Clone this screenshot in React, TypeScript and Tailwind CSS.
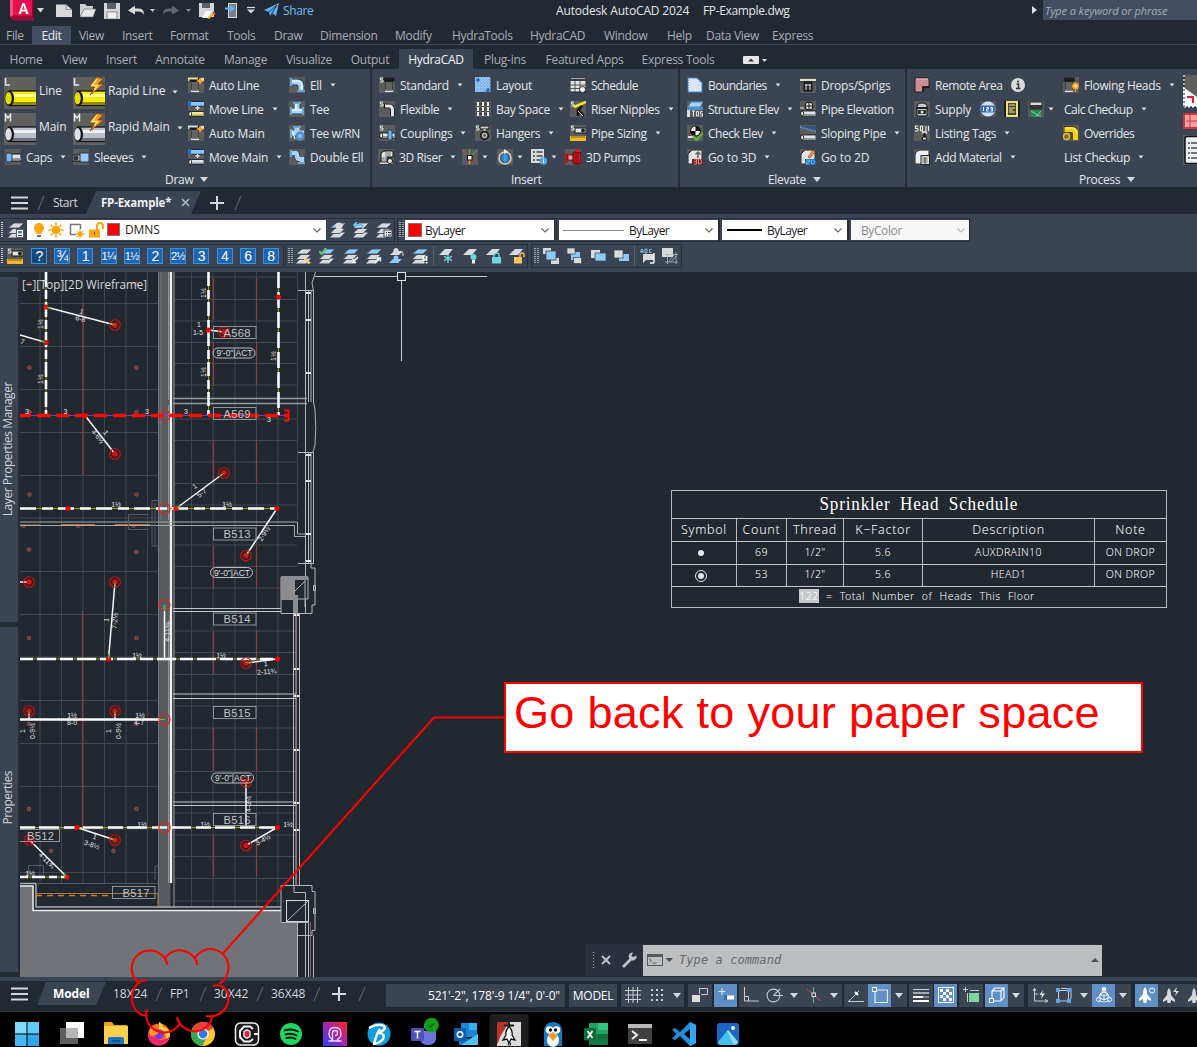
import React from 'react';

type Kids = { children?: React.ReactNode };

/* ---------- small drawing helpers ---------- */

function Svg({ s = 16, children, className = '' }: { s?: number; className?: string } & Kids) {
  return (
    <svg width={s} height={s} viewBox="0 0 16 16" className={'shrink-0 ' + className} fill="none">
      {children}
    </svg>
  );
}

const Bg = () => <rect width="16" height="16" fill="#5c5c5a" />;
const S = () => <path d="M4 1H1.5V3H4V5H1" stroke="#e8e8e8" strokeWidth="1" />;
const Pipe = ({ y = 9, c = '#e2e6ee', d = '#8d93a0' }: { y?: number; c?: string; d?: string }) => (
  <g>
    <rect x="1" y={y} width="15" height="5" fill={c} stroke="#111" strokeWidth="0.8" />
    <rect x="3" y={y + 3} width="13" height="1.5" fill={d} />
    <ellipse cx="2.2" cy={y + 2.5} rx="1.5" ry="2.3" fill="#fff" stroke="#111" strokeWidth="0.8" />
  </g>
);
const Head = ({ x = 4 }: { x?: number }) => (
  <g transform={`translate(${x} 0)`}>
    <rect x="0" y="1" width="10" height="3" fill="#222" stroke="#111" />
    <rect x="1.5" y="4" width="7" height="10" rx="1" fill="#1d1d1d" />
    <path d="M3 5v8M5 5v8M7 5v8" stroke="#bbb" strokeWidth="0.9" />
    <rect x="1" y="13.5" width="8" height="1.5" fill="#ddd" />
  </g>
);
const Star = ({ x = 12, y = 4 }: { x?: number; y?: number }) => (
  <path d={`M${x} ${y - 4}l1.2 2.8 2.8 1.2-2.8 1.2L${x} ${y + 4}l-1.2-2.8L${x - 4} ${y}l2.8-1.2z`} fill="#ffa52b" />
);

const ICONS: Record<string, React.ReactNode> = {
  autoLine: <><Bg /><rect y="1" width="16" height="3" fill="#e7df8a" /><Head x={2} /><rect y="0.500" width="10" height="2" fill="#e7df8a" /><Star /></>,
  moveLine: <><Bg /><rect y="1" width="16" height="4" fill="#8ec4ee" /><path d="M0 0.500h16M0 5.300h16" stroke="#16324f" /><rect y="0" width="3" height="6" fill="#2f6fb5" /><path d="M9.500 5v4M7.500 7h4" stroke="#e7eef6" strokeWidth="1.300" /><Pipe y={10.500} c="#efe8a0" d="#b3a94e" /></>,
  autoMain: <><Bg /><rect y="1" width="16" height="3" fill="#d6dae2" /><Head x={2} /><rect y="0.500" width="10" height="2" fill="#d6dae2" /><Star /></>,
  moveMain: <><Bg /><rect y="1" width="16" height="4" fill="#8ec4ee" /><path d="M0 0.500h16M0 5.300h16" stroke="#16324f" /><rect y="0" width="3" height="6" fill="#2f6fb5" /><path d="M9.500 5v4M7.500 7h4" stroke="#e7eef6" strokeWidth="1.300" /><Pipe y={10.500} /></>,
  ell: <><Bg /><path d="M2 5h6q4 0 4 4v6" stroke="#1d3c58" strokeWidth="6.500" /><path d="M2 5h6q4 0 4 4v6" stroke="#a9d4f5" strokeWidth="5" /><path d="M2 4h6q5 0 5 5v6" stroke="#eaf6ff" strokeWidth="1.500" /><rect x="1" y="1" width="2" height="8" fill="#6aa5d8" /><rect x="8" y="13" width="8" height="2" fill="#6aa5d8" /></>,
  tee: <><Bg /><path d="M1 10h14M8 3v7" stroke="#1d3c58" strokeWidth="6.500" /><path d="M1 10h14M8 2v8" stroke="#a9d4f5" strokeWidth="5" /><path d="M2 9h12M7 3v6" stroke="#eaf6ff" strokeWidth="1.500" /><rect x="4" y="1" width="8" height="2" fill="#6aa5d8" /><rect x="1" y="6" width="2" height="8" fill="#6aa5d8" /><rect x="13" y="6" width="2" height="8" fill="#6aa5d8" /></>,
  teeRn: <><Bg /><path d="M1 8h14M8 2v7" stroke="#a9d4f5" strokeWidth="5" /><rect x="4" y="1" width="8" height="2" fill="#6aa5d8" /><rect x="1" y="4" width="2" height="9" fill="#6aa5d8" /><circle cx="11" cy="11" r="4.500" fill="#4b8fd6" /><circle cx="11" cy="11" r="2" fill="#8fc2f2" /><path d="M3 6l3 8" stroke="#fff" /></>,
  dell: <><Bg /><path d="M2 4h4q2 0 2 3t3 3h2v5" stroke="#1d3c58" strokeWidth="6" /><path d="M2 4h4q2 0 2 3t3 3h2v5" stroke="#a9d4f5" strokeWidth="4.500" /><rect x="1" y="1" width="2" height="7" fill="#6aa5d8" /><rect x="9" y="13" width="7" height="2" fill="#6aa5d8" /></>,
  caps: <><Bg /><rect x="5" y="5" width="11" height="7" fill="#dfe4ec" stroke="#111" /><rect x="6" y="9" width="10" height="2" fill="#8d93a0" /><rect x="1" y="4" width="6" height="9" rx="2" fill="#7ab5ee" stroke="#1d3c58" /></>,
  sleeves: <><Bg /><rect x="0" y="6" width="10" height="6" fill="#c9ced8" stroke="#111" /><circle cx="3" cy="9" r="2.500" fill="#333" /><rect x="7" y="4" width="9" height="9" fill="#9cc6f5" stroke="#1d3c58" /></>,
  standard: <><Bg /><Head x={5} /><S /></>,
  flexible: <><Bg /><path d="M5 5h5q3.500 0 3.500 4v6" stroke="#111" strokeWidth="4.500" /><path d="M6 5h4q3.500 0 3.500 4v6" stroke="#e1e4ea" strokeWidth="3" /><S /></>,
  couplings: <><Bg /><Pipe y={8} /><rect x="9" y="5" width="4" height="10" rx="1" fill="#7ab5ee" stroke="#1d3c58" /><S /></>,
  riser3d: <><Bg /><path d="M3 15V6q0-4 5-4h7v6H9v7" fill="#dfe2e6" stroke="#111" /><path d="M8 3v5M10 3v5M12 3v5M3 9h5M3 11h5M3 13h5" stroke="#444" strokeWidth="0.700" /><rect x="1" y="13" width="14" height="2.500" fill="#d5d8dc" stroke="#111" strokeWidth="0.700" /><circle cx="12" cy="12" r="2.500" fill="#eee" stroke="#111" /></>,
  layout: <><rect width="15" height="15" fill="#6da7e8" /><path d="M2 0v15M5 0v15M8 0v15M11 0v15M14 0v15M0 2h16M0 5h16M0 8h16M0 11h16M0 14h16" stroke="#d8e8fa" strokeWidth="0.900" strokeDasharray="1.500 1.500" /><path d="M3 1v4M1 3h4M13 11v5M10.500 13.500h5" stroke="#2668c0" strokeWidth="1.600" /></>,
  bay: <><Bg /><path d="M3 0v16M8 0v16M13 0v16M0 3h16M0 8h16M0 13h16" stroke="#2c2c2c" /><g fill="#eee"><rect x="2" y="1" width="2" height="4" /><rect x="7" y="1" width="2" height="4" /><rect x="12" y="1" width="2" height="4" /><rect x="2" y="6" width="2" height="4" /><rect x="7" y="6" width="2" height="4" /><rect x="12" y="6" width="2" height="4" /><rect x="2" y="11" width="2" height="4" /><rect x="7" y="11" width="2" height="4" /><rect x="12" y="11" width="2" height="4" /></g></>,
  hangers: <><Bg /><rect x="5" y="1" width="9" height="3" fill="#ccc" stroke="#111" /><path d="M9.500 4v3" stroke="#ddd" strokeWidth="2" /><circle cx="9.500" cy="10.500" r="4" stroke="#1a1a1a" strokeWidth="1.500" /><circle cx="9.500" cy="10.500" r="2" stroke="#ddd" /><S /></>,
  schedule: <><rect y="0" width="16" height="15" fill="#e3e3e3" stroke="#222" /><rect y="0" width="16" height="4" fill="#3a3f48" /><path d="M1 1.500h14" stroke="#aaa" /><path d="M0 8h16M0 11.500h16M5 4v11M10 4v11" stroke="#555" /><circle cx="12.500" cy="12.500" r="3" fill="#fff" stroke="#222" /></>,
  nipples: <><Bg /><path d="M4 6l12-5" stroke="#f4ea20" strokeWidth="2.500" /><path d="M8 15V9l4-4M8 9l6 6" stroke="#111" strokeWidth="2.500" /><path d="M8 10l5 5" stroke="#ddd" /><S /></>,
  sizing: <><Bg /><rect x="5" y="3" width="11" height="5" fill="#e1e4ea" stroke="#111" /><rect x="0" y="11" width="16" height="5" fill="#f3b62c" /><path d="M2 11v2M4 11v2M6 11v2M8 11v2M10 11v2M12 11v2M14 11v2" stroke="#6b4a00" strokeWidth="0.800" /><circle cx="13" cy="5.500" r="2" fill="#222" /><S /></>,
  ucs: <><Bg /><path d="M7.500 0v8" stroke="#5aa84c" /><path d="M15 1L8 8" stroke="#5aa84c" /><path d="M1 1l6 7" stroke="#d34a3c" /><path d="M1 15l6-6" stroke="#7a2ad0" /><path d="M15 14L8 8" stroke="#c44" /><path d="M7.500 15V9" stroke="#f0a22c" strokeWidth="1.500" /><rect x="5.500" y="6.500" width="4.500" height="4.500" fill="#fff" stroke="#111" /></>,
  rotate: <><Bg /><circle cx="8" cy="9" r="6" stroke="#cfd3d8" strokeWidth="1.500" /><circle cx="8" cy="9" r="3.500" fill="#1c8be0" /><path d="M8 1v14" stroke="#4db2ff" strokeWidth="1" /><path d="M7 0l4 2.500L7 5z" fill="#eee" /></>,
  listInfo: <><rect x="0" y="0" width="13" height="14" fill="#d8dadd" /><path d="M2 3h2M2 7h2M2 11h2M5.500 3h6M5.500 7h6M5.500 11h4" stroke="#444" strokeWidth="1.300" /><circle cx="12.500" cy="12" r="3.800" fill="#4ba6e8" /><path d="M12.500 11v3" stroke="#fff" /><rect x="12" y="9.300" width="1" height="1" fill="#fff" /></>,
  pumps: <><Bg /><rect x="0" y="4" width="3" height="10" fill="#c4141c" /><rect x="3" y="6" width="6" height="5" fill="#e8a0a0" stroke="#400" strokeWidth="0.700" /><rect x="8" y="3" width="8" height="12" rx="2" fill="#cf1820" stroke="#500" /><path d="M11 3v12M13 3v12" stroke="#700" strokeWidth="0.800" /><rect x="11" y="0" width="4" height="3" fill="#cf1820" /></>,
  boundaries: <><path d="M1 1h9l5 5v9H1z" fill="#dbe4f3" stroke="#3a86e0" strokeWidth="1.500" strokeDasharray="1.500 1" /></>,
  structure: <><Bg /><path d="M4 1h12l-3 5H1z" fill="#a9d6fb" stroke="#4c86bb" /><rect x="0" y="6" width="16" height="3" fill="#4f8fd0" /><rect x="0" y="9" width="3" height="7" fill="#ddd" /><path d="M5 10h3M6.500 10v5.500M9.500 10.500h2v4.500h-2zM15.500 10.500h-2v2.300h2v2.200h-2.500" stroke="#eee" strokeWidth="0.900" /></>,
  check: <><Bg /><circle cx="8.500" cy="6" r="5" fill="#eee" stroke="#111" /><path d="M8.500 1v5h5a5 5 0 00-5-5zM8.500 6v5a5 5 0 01-5-5z" fill="#111" /><path d="M1 12h7" stroke="#ddd" strokeWidth="2" /><path d="M6 11l3.500 4L16 8" stroke="#5fb336" strokeWidth="2.500" /></>,
  go3d: <><Bg /><path d="M1 15V5l4-4h10v14z" fill="#e3e3e6" stroke="#222" /><path d="M11 9V3M8.500 5.500L11 3l2.500 2.500" stroke="#666" strokeWidth="1.500" /><rect x="5" y="10" width="11" height="6" fill="#6c2a30" /><path d="M7 10h2.500v2.500H7.500M9.500 12.500V15H7M11.500 10v5h1q2 0 2-2.500t-2-2.500z" stroke="#ff7f7f" strokeWidth="1" /></>,
  drops: <><Bg /><path d="M0 3h16" stroke="#ddd" strokeWidth="2.500" /><path d="M0 1h16M0 5h16" stroke="#111" strokeWidth="0.800" /><rect x="4" y="5" width="8" height="9" fill="#2a2a2a" stroke="#111" /><path d="M6 7v6M10 7v6M5 8h6" stroke="#ddd" /></>,
  pipeElev: <><Bg /><circle cx="9" cy="5" r="4" fill="#ddd" stroke="#111" /><path d="M9 1v4h4M9 5v4M5 5h4" stroke="#111" /><Pipe y={10} /><path d="M0 7h4" stroke="#ddd" /></>,
  sloping: <><Bg /><path d="M0 1h16v5z" fill="#33527c" /><path d="M0 2l16 4.500" stroke="#5b9be0" strokeWidth="1.500" strokeDasharray="2 1" /><Pipe y={10} /></>,
  go2d: <><Bg /><path d="M1 15V5l4-4h10v14z" fill="#e3e3e6" stroke="#222" /><path d="M8 8l5-7 2 2-5 6z" fill="#f09a2a" stroke="#733" strokeWidth="0.600" /><rect x="5" y="10" width="11" height="6" fill="#1c62b0" /><path d="M6.500 11h3v2h-3v2h3M11.500 11v4h1q2 0 2-2t-2-2z" stroke="#6fc0ff" strokeWidth="1" /></>,
  remote: <><path d="M1 1h14v9H9v5H1z" fill="#c98f92" stroke="#3a1b1d" /><path d="M15 10H9v5" stroke="#111" strokeWidth="1.500" /><path d="M2 2h12" stroke="#e4c2c4" /></>,
  supply: <><Bg /><path d="M3 15V6q0-4 5-4t5 4v9z" fill="#c7cbd0" stroke="#111" /><rect x="2" y="6" width="12" height="2" fill="#222" /><rect x="4" y="9" width="8" height="4" fill="#333" /><circle cx="8" cy="11" r="1.500" fill="#ddd" /></>,
  n123: <><rect width="16" height="16" rx="1" fill="#55585e" /><circle cx="8" cy="8" r="7.500" fill="#cfe2f8" /><rect x="1" y="4.500" width="14" height="7" rx="1" fill="#2b68bf" /><path d="M3.500 6v4M6.500 6.500h2v1.500h-2v2h2M10.500 6.500h2v3.500h-2M10.500 8h2" stroke="#fff" strokeWidth="1" /></>,
  yellowDoc: <><rect width="16" height="16" fill="#1c1c1c" /><rect x="2" y="0" width="12" height="16" fill="#e9e27a" /><path d="M1.500 0v16M14.500 0v16" stroke="#111" strokeDasharray="1.500 1.500" /><rect x="4" y="2" width="8" height="12" fill="#4a4a3e" /><path d="M5 4h6M5 7h6M5 9h4M5 11h6" stroke="#e9e27a" /></>,
  greenDoc: <><Bg /><rect x="2" y="1" width="12" height="7" fill="#d7d9db" stroke="#222" /><rect x="2" y="4" width="12" height="4" fill="#333" /><rect x="3" y="9" width="10" height="7" fill="#2c8a5a" /><path d="M3 10l10 6M13 10l-5 6" stroke="#8fe0b4" strokeWidth="0.800" /></>,
  tags: <><Bg /><path d="M4 1H1.500v2.500H4V6H1M6.500 1v5h2V1zM12 1v5M14.500 1v5" stroke="#e8e8e8" strokeWidth="1" /><rect x="8" y="6" width="5" height="3" fill="#ccc" /><path d="M10.500 8v4" stroke="#111" strokeWidth="2" /><path d="M8 15l1-3h3l1 3z" fill="#ddd" stroke="#111" /></>,
  addMat: <><Bg /><path d="M1 15V6q1-5 6-5h8v6H8v8z" fill="#f0f1f2" stroke="#222" /><rect x="7" y="6.500" width="8.500" height="9" fill="#ddd" stroke="#222" /><path d="M8.500 9h5M8.500 11h5M8.500 13h5M11 8v7" stroke="#444" strokeWidth="0.800" /></>,
  flowing: <><Bg /><Head x={1} /><circle cx="12.500" cy="9" r="3.500" fill="#ff9a1c" /><circle cx="12.500" cy="9" r="1.700" fill="#fff1b0" /><path d="M12.500 12v3" stroke="#ff9a1c" /></>,
  overrides: <><Bg /><path d="M1 4.500h7q4 0 4 4V15" stroke="#4b3d00" strokeWidth="7" /><path d="M1.500 4.500h7q4 0 4 4V15" stroke="#f1cf12" strokeWidth="5.200" /><path d="M2 3h7q4.500 0 4.500 4.500" stroke="#fff38c" strokeWidth="1.200" /><circle cx="3.500" cy="11.500" r="3" fill="#7a6a20" stroke="#e5c81c" strokeWidth="1.300" /></>,
};

const Ic = ({ n }: { n: string }) => <Svg>{ICONS[n]}</Svg>;
const Arr = ({ c = '' }: { c?: string }) => (
  <svg width="6" height="4" viewBox="0 0 6 4" className={'shrink-0 ' + c}><path d="M0.500 0.500h5L3 3.500z" fill="#dfe1e4" /></svg>
);
const ArrL = ({ c = '' }: { c?: string }) => (
  <svg width="8" height="5" viewBox="0 0 8 5" className={'shrink-0 ' + c}><path d="M0 0h8L4 5z" fill="#d6d8dc" /></svg>
);

/* ---------- ribbon ---------- */

function Cmd({ icon, t, arrow, plain, fit = 'tracking-[-0.3px]' }: { icon?: string; t: string; arrow?: boolean; plain?: boolean; fit?: string }) {
  return (
    <div className="flex h-6 items-center whitespace-nowrap">
      {icon && <Ic n={icon} />}
      <span className={'pt-0.5 ' + fit + (plain ? ' ml-px' : ' ml-[5px]')}>{t}</span>
      {arrow && <Arr c="ml-2" />}
    </div>
  );
}

function BigPipe({ l, yellow, bolt }: { l: string; yellow?: boolean; bolt?: boolean }) {
  const a = yellow ? '#f6ef00' : '#b9bec8';
  const b = yellow ? '#fffb9a' : '#eef0f4';
  const d = yellow ? '#8f8a00' : '#6d727c';
  return (
    <svg width="32" height="32" viewBox="0 0 32 32" className="shrink-0">
      <rect width="32" height="32" fill="#5f5f5d" />
      {l === 'L' ? <path d="M1.500 1v7h4.500" stroke="#e4e4e4" strokeWidth="1.600" fill="none" /> : <path d="M1.500 8.500V1.500L4 5l2.500-3.500v7" stroke="#e4e4e4" strokeWidth="1.500" fill="none" />}
      <rect x="5" y="14" width="28" height="14.500" fill={a} stroke="#15151a" strokeWidth="1.300" />
      <rect x="6" y="17" width="26" height="3" fill={b} />
      <rect x="6" y="25" width="26" height="3" fill={d} />
      <ellipse cx="5.500" cy="21.300" rx="4.600" ry="7.600" fill="#15151a" />
      <ellipse cx="4.500" cy="21.300" rx="3.200" ry="6.200" fill={yellow ? '#e4dd00' : '#dddfe4'} />
      {bolt && <path d="M24 0l-8 10h6l-5 8 14-11h-6l5-5z" fill="#f59a1a" stroke="#7a3e00" strokeWidth="0.800" />}
      {bolt && <path d="M24 2l-5 6.500h5.500l-3 4" stroke="#ffe38a" strokeWidth="1.500" fill="none" />}
    </svg>
  );
}

function Panel({ w, title, tri, pad, children }: { w: string; title: string; tri?: boolean; pad: string } & Kids) {
  return (
    <div className={'flex shrink-0 flex-col border-r-2 border-[#272e39] bg-[#3b4453] ' + w}>
      <div className="mt-1 flex h-24">{children}</div>
      <div className={'flex h-[18px] items-center pt-[3px] ' + pad}>
        <span className="tracking-[-0.3px]">{title}</span>
        {tri && <ArrL c="ml-[7px]" />}
      </div>
    </div>
  );
}

function BigCmd({ l, t, yellow, bolt }: { l: string; t: string; yellow?: boolean; bolt?: boolean }) {
  return (
    <div className="flex h-9 items-center gap-[3px] pt-1">
      <BigPipe l={l} yellow={yellow} bolt={bolt} />
      <span className="-mt-1 tracking-[-0.1px] whitespace-nowrap">{t}</span>
      {bolt && <Arr c="-mt-0.5 ml-1" />}
    </div>
  );
}

function Ribbon() {
  return (
    <div className="flex h-[118px] overflow-hidden text-[12px] text-[#e4e6e9]">
      <Panel w="w-[372px]" title="Draw" tri pad="pl-[165px]">
        <div className="w-[69px] pl-1">
          <BigCmd l="L" t="Line" yellow />
          <BigCmd l="M" t="Main" />
          <div className="ml-px"><Cmd icon="caps" t="Caps" arrow /></div>
        </div>
        <div className="w-[115px] pl-1">
          <BigCmd l="L" t="Rapid Line" yellow bolt />
          <BigCmd l="M" t="Rapid Main" bolt />
          <Cmd icon="sleeves" t="Sleeves" arrow />
        </div>
        <div className="w-[101px] pl-1">
          <Cmd icon="autoLine" t="Auto Line" />
          <Cmd icon="moveLine" t="Move Line" arrow />
          <Cmd icon="autoMain" t="Auto Main" fit="tracking-[-0.2px]" />
          <Cmd icon="moveMain" t="Move Main" arrow />
        </div>
        <div className="pl-1">
          <Cmd icon="ell" t="Ell" arrow />
          <Cmd icon="tee" t="Tee" />
          <Cmd icon="teeRn" t="Tee w/RN" fit="tracking-[-0.45px]" />
          <Cmd icon="dell" t="Double Ell" />
        </div>
      </Panel>
      <Panel w="w-[308px]" title="Insert" pad="pl-[139px]">
        <div className="flex flex-col pl-[7px]">
          <div className="flex">
            <div className="w-24">
              <Cmd icon="standard" t="Standard" arrow />
              <Cmd icon="flexible" t="Flexible" arrow fit="tracking-[-0.4px]" />
              <Cmd icon="couplings" t="Couplings" arrow />
            </div>
            <div className="w-[95px]">
              <Cmd icon="layout" t="Layout" />
              <Cmd icon="bay" t="Bay Space" arrow />
              <Cmd icon="hangers" t="Hangers" arrow fit="tracking-[-0.4px]" />
            </div>
            <div>
              <Cmd icon="schedule" t="Schedule" fit="tracking-[-0.5px]" />
              <Cmd icon="nipples" t="Riser Nipples" arrow fit="tracking-[-0.35px]" />
              <Cmd icon="sizing" t="Pipe Sizing" arrow fit="tracking-[-0.35px]" />
            </div>
          </div>
          <div className="-ml-px flex h-6 items-center">
            <div className="w-[84px]"><Cmd icon="riser3d" t="3D Riser" arrow fit="tracking-[-0.4px]" /></div>
            <div className="flex w-[35px] items-center gap-1"><Ic n="ucs" /><Arr /></div>
            <div className="flex w-[34px] items-center gap-1"><Ic n="rotate" /><Arr /></div>
            <div className="flex w-[34px] items-center gap-1"><Ic n="listInfo" /><Arr /></div>
            <Cmd icon="pumps" t="3D Pumps" fit="tracking-[-0.4px]" />
          </div>
        </div>
      </Panel>
      <Panel w="w-[227px]" title="Elevate" tri pad="pl-[88px]">
        <div className="w-[120px] pl-[7px]">
          <Cmd icon="boundaries" t="Boundaries" arrow fit="tracking-[-0.55px]" />
          <Cmd icon="structure" t="Structure Elev" arrow fit="tracking-[-0.5px]" />
          <Cmd icon="check" t="Check Elev" arrow fit="tracking-[-0.45px]" />
          <Cmd icon="go3d" t="Go to 3D" arrow fit="tracking-[-0.1px]" />
        </div>
        <div>
          <Cmd icon="drops" t="Drops/Sprigs" fit="tracking-[-0.25px]" />
          <Cmd icon="pipeElev" t="Pipe Elevation" fit="tracking-[-0.4px]" />
          <Cmd icon="sloping" t="Sloping Pipe" arrow />
          <Cmd icon="go2d" t="Go to 2D" fit="tracking-[-0.1px]" />
        </div>
      </Panel>
      <Panel w="w-[310px]" title="Process" tri pad="pl-[172px]">
        <div className="w-[156px] pl-[7px]">
          <div className="flex">
            <div className="w-[97px]"><Cmd icon="remote" t="Remote Area" fit="tracking-[-0.45px]" /></div>
            <svg width="14" height="24" viewBox="0 -5 14 24"><circle cx="7" cy="7" r="7" fill="#d9dadc" /><path d="M5.500 6h2v4.500M5 10.500h4.500" stroke="#333" strokeWidth="1.500" fill="none" /><circle cx="7" cy="3.500" r="1.100" fill="#333" /></svg>
          </div>
          <div className="flex items-center">
            <div className="w-[66px]"><Cmd icon="supply" t="Supply" /></div>
            <Ic n="n123" /><span className="w-2" /><Ic n="yellowDoc" /><span className="w-2" /><Ic n="greenDoc" /><Arr c="ml-1" />
          </div>
          <Cmd icon="tags" t="Listing Tags" arrow />
          <Cmd icon="addMat" t="Add Material" arrow fit="tracking-[-0.4px]" />
        </div>
        <div className="w-[120px]">
          <Cmd icon="flowing" t="Flowing Heads" arrow fit="tracking-[-0.35px]" />
          <Cmd t="Calc Checkup" arrow plain fit="tracking-[-0.5px]" />
          <Cmd icon="overrides" t="Overrides" fit="tracking-[-0.5px]" />
          <Cmd t="List Checkup" arrow plain fit="tracking-[-0.4px]" />
        </div>
        <svg width="32" height="96" viewBox="0 0 32 96" fill="none">
          <rect y="2" width="32" height="32" fill="#5f5f5d" />
          <path d="M0 14l14 10v10H0z" fill="#fff" />
          <path d="M1 2v32h14" stroke="#fff" strokeDasharray="2 2" /><path d="M1 2v32h14" stroke="#111" strokeDasharray="2 2" strokeDashoffset="2" />
          <path d="M4 24h6v6" stroke="#e02030" strokeWidth="2" />
          <rect x="1" y="41" width="20" height="14" fill="#f2a0a4" stroke="#d0323a" strokeWidth="2" /><path d="M7 42v12M3 48h12" stroke="#d0323a" />
          <rect y="62" width="20" height="30" fill="#5f5f5d" />
          <rect x="2" y="63.500" width="20" height="27" rx="2" fill="#eceef0" stroke="#111" strokeWidth="1.500" />
          <path d="M5 70h2M5 75h2M5 80h2M5 85h2M8 70h8M8 75h8M8 80h8M8 85h8" stroke="#444c5a" strokeWidth="1.500" />
        </svg>
      </Panel>
    </div>
  );
}

/* ---------- title, menus ---------- */

function TitleBar() {
  return (
    <div className="flex h-6 items-start bg-[#222933] text-[12px]">
      <svg width="260" height="22" viewBox="0 0 260 22" fill="none" className="shrink-0">
        <path d="M10 0h22v18H13l-3-2z" fill="#e51050" /><path d="M10 17l3-1.500h19l2 2v3H12z" fill="#a00a3a" /><path d="M32 0v17l2 2V0z" fill="#7a0a2e" /><path d="M10 0v17l3-2V0z" fill="#f4507f" />
        <path d="M22.500 3L18.500 14h2.400l.8-2.400h3.600l.8 2.400h2.500L24.500 3zm1 2.500l1.200 4.200h-2.400z" fill="#fff" />
        <path d="M37 8h7l-3.500 4.500z" fill="#d6d8dc" />
        <path d="M56 4.500h10l6 5V17H56z" fill="#d8d9db" /><path d="M66 4.500v5h6" stroke="#8b8f95" />
        <path d="M80 4h5l2 2h6v4H84l-4 7z" fill="#cfd0d2" /><path d="M84 9h12l-3 8H80z" fill="#e6e6e7" stroke="#5d6066" strokeWidth="0.600" />
        <path d="M104 3h16v16h-16z" fill="#d5d6d8" /><rect x="107" y="3" width="9" height="6" fill="#5a5e66" /><rect x="107" y="12" width="10" height="7" fill="#f2f2f2" stroke="#666" strokeWidth="0.700" />
        <path d="M128 10.500l7-5v3h4q5 0 5 6-2-3-5-3h-4v3z" fill="#d8d9db" />
        <path d="M150 9h5l-2.500 3z" fill="#c9cbce" />
        <path d="M179 10.500l-7-5v3h-4q-5 0-5 6 2-3 5-3h4v3z" fill="#62676f" />
        <path d="M186 9h5l-2.500 3z" fill="#8a8e95" />
        <path d="M199 3h15v14h-15z" fill="#d5d6d8" /><rect x="202" y="3" width="8" height="5" fill="#5a5e66" /><path d="M206 11h6l-4 7h-6z" fill="#fff" /><path d="M207 18l6-6 2 2-6 5z" fill="#f0b63a" /><path d="M213 12l2 2" stroke="#e04a4a" strokeWidth="2" />
        <rect x="228.500" y="3.500" width="8" height="14" fill="#7a7f88" stroke="#d5d6d8" /><path d="M225 8.500h8M230 5.500l3 3-3 3" stroke="#62b6f5" strokeWidth="2" />
        <path d="M247 7.500h8" stroke="#d6d8dc" strokeWidth="1.200" /><path d="M247 9.500h8l-4 4z" fill="#d6d8dc" />
      </svg>
      <svg width="20" height="20" viewBox="0 0 20 20" className="shrink-0"><path d="M4 10L19 3l-3 13-4-3-2 3-1-4z" fill="#5cb0f2" /><path d="M9 12l8-7-5 8" stroke="#222933" fill="none" strokeWidth="0.900" /></svg>
      <span className="mt-[3px] ml-[3px] w-[273px] tracking-[-0.4px] text-[#74b9ee]">Share</span>
      <span className="mt-[3px] w-[147px] tracking-[-0.16px] text-[#e4e6e9]">Autodesk AutoCAD 2024</span>
      <span className="mt-[3px] w-[329px] tracking-[-0.35px] text-[#e4e6e9]">FP-Example.dwg</span>
      <svg width="11" height="20" viewBox="0 0 11 20" className="shrink-0"><path d="M0 6l5 4-5 4z" fill="#dfe1e4" /></svg>
      <div className="h-5 flex-1 bg-[#434d61] pl-0.5 text-[11px] leading-[21px] tracking-[-0.1px] whitespace-nowrap text-[#a5abb5] italic">Type a keyword or phrase</div>
    </div>
  );
}

const MENUS: [string, string][] = [
  ['File', 'w-[26px]'], ['Edit', 'w-[39px]'], ['View', 'w-[43px]'], ['Insert', 'w-12'], ['Format', 'w-[57px]'],
  ['Tools', 'w-[47px]'], ['Draw', 'w-[46px]'], ['Dimension', 'w-[75px]'], ['Modify', 'w-[57px]'], ['HydraTools', 'w-[78px]'],
  ['HydraCAD', 'w-[74px]'], ['Window', 'w-[63px]'], ['Help', 'w-[39px]'], ['Data View', 'w-[66px]'], ['Express', 'w-[60px]'],
];

const TABS: [string, string][] = [
  ['Home', 'w-[52px]'], ['View', 'w-[45px]'], ['Insert', 'w-[49px]'], ['Annotate', 'w-[68px]'], ['Manage', 'w-[63px]'],
  ['Visualize', 'w-16'], ['Output', 'w-[58px]'], ['HydraCAD', 'w-[74px]'], ['Plug-ins', 'w-16'], ['Featured Apps', 'w-[95px]'], ['Express Tools', 'w-[92px]'],
];

function menuClass(i: number) {
  if (i === 0) return ' mt-0.5 leading-5';
  if (i === 1) return ' mt-0.5 bg-[#434d61] text-center leading-5 text-[#e9ebee]';
  return ' mt-0.5 pl-2 leading-5 whitespace-nowrap';
}

function Menus() {
  return (
    <>
      <div className="flex h-[21px] items-start border-b border-[#3c4553] bg-[#222933] pl-[6px] text-[12px] tracking-[-0.3px] text-[#a9aeb6]">
        {MENUS.map(([t, w], i) => (
          <span key={t} className={w + ' h-[18px]' + menuClass(i)}>{t}</span>
        ))}
      </div>
      <div className="flex h-6 items-end bg-[#222933] text-[12px] tracking-[-0.25px] text-[#a9aeb6]">
        {TABS.map(([t, w], i) => (
          <span key={t} className={w + ' h-5 text-center leading-[22px] whitespace-nowrap ' + (i === 7 ? 'bg-[#3b4453] text-[#f2f3f5]' : '')}>{t}</span>
        ))}
        <svg width="60" height="20" viewBox="0 0 60 20"><rect x="19" y="7" width="16" height="8" rx="1" fill="#e4e5e7" /><path d="M24 12.500l3-3 3 3z" fill="#333" /><path d="M38 10h5l-2.500 3z" fill="#e4e5e7" /></svg>
      </div>
    </>
  );
}

/* ---------- document tabs and toolbars ---------- */

const Burger = () => <svg width="17" height="14" viewBox="0 0 17 14" className="shrink-0"><path d="M0 1.500h17M0 7h17M0 12.500h17" stroke="#d3d6da" strokeWidth="1.800" /></svg>;
const Slash = ({ c = '' }: { c?: string }) => <svg width="8" height="16" viewBox="0 0 8 16" className={'shrink-0 ' + c}><path d="M1 15L7 1" stroke="#555d69" strokeWidth="1.200" /></svg>;
const Plus = () => <svg width="14" height="14" viewBox="0 0 14 14" className="shrink-0"><path d="M7 0v14M0 7h14" stroke="#d8dadd" strokeWidth="2" /></svg>;

function DocTabs() {
  return (
    <div className="flex h-[27px] items-center bg-[#222933] pt-1 text-[12px] text-[#d3d6da]">
      <div className="flex w-[86px] items-center pl-[11px]"><Burger /><Slash c="ml-[9px]" /><span className="ml-2 tracking-[-0.5px]">Start</span></div>
      <div className="flex h-[23px] w-[115px] items-center bg-[#3b4453] pl-[15px] [clip-path:polygon(10px_0,100%_0,calc(100%-10px)_100%,0_100%)]">
        <span className="w-[80px] text-[11.5px] font-bold tracking-[-0.2px] text-[#f0f1f3]">FP-Example*</span>
        <svg width="9" height="9" viewBox="0 0 9 9"><path d="M1 1l7 7M8 1L1 8" stroke="#b5bac2" strokeWidth="1.600" /></svg>
      </div>
      <div className="flex items-center pl-[9px]"><Plus /><Slash c="ml-[10px]" /></div>
    </div>
  );
}

const Grip = () => <svg width="5" height="16" viewBox="0 0 5 16" className="shrink-0"><path d="M1 0v16M4 0v16" stroke="#c9ccd1" strokeWidth="1.400" strokeDasharray="1 1" /></svg>;
const Chev = ({ c = '#666' }: { c?: string }) => <svg width="8" height="5" viewBox="0 0 8 5" className="shrink-0"><path d="M0.500 0.500L4 4l3.500-3.500" stroke={c} strokeWidth="1.100" fill="none" /></svg>;
const Layers = ({ top = '#d9dadc', children }: { top?: string } & Kids) => (
  <Svg>
    <path d="M5 8h10l-5 5H0z" fill="#d9dadc" transform="translate(0 2.500)" />
    <path d="M5 8h10l-5 5H0z" fill="#d9dadc" stroke="#3b4453" strokeWidth="0.800" transform="translate(0 -1.500)" />
    <path d="M6 6h10l-5 5H0z" fill={top} stroke="#3b4453" strokeWidth="0.800" transform="translate(0 -5)" />
    {children}
  </Svg>
);
const Sheet = ({ children }: Kids) => <Svg><path d="M6 1h8L9 7H0z" fill="#d9dadc" />{children}</Svg>;

const SIZES = ['?', '¾', '1', '1¼', '1½', '2', '2½', '3', '4', '6', '8'];

function Toolbars() {
  const box = 'flex shrink-0 items-center border border-[#272e39] ';
  return (
    <div className="h-[58px] bg-[#3b4453] pt-1">
      <div className="flex h-6 text-[12px] text-[#1d1d1d]">
        <div className={box + 'w-[395px] border-l-0'}>
          <svg width="3" height="16" viewBox="2 0 3 16" className="mr-[5px] shrink-0"><path d="M4 0v16" stroke="#c9ccd1" strokeDasharray="1 1" strokeWidth="2" /></svg>
          <Layers><rect x="8.500" y="7.500" width="7" height="8" fill="#fff" stroke="#444" strokeWidth="0.800" /><rect x="10" y="9" width="4" height="2.500" fill="#3a86e0" /><path d="M10 13.500h4" stroke="#333" /></Layers>
          <div className="ml-[3px] flex h-5 w-[299px] shrink-0 items-center bg-white pl-[5px]">
            <svg width="88" height="18" viewBox="0 0 88 18" className="shrink-0" fill="none">
              <circle cx="7" cy="7" r="5" fill="#f9a70c" /><path d="M4.500 10h5v3h-5z" fill="#f9a70c" /><path d="M5 14h4v2H5z" fill="#6a6f78" />
              <circle cx="24" cy="9" r="4.300" fill="#f9a70c" /><path d="M24 1.500v3M24 13.500v3M16.500 9h3M28.500 9h3M18.700 3.700l2 2M27.300 12.300l2 2M29.300 3.700l-2 2M20.700 12.300l-2 2" stroke="#f9a70c" strokeWidth="1.600" />
              <path d="M38 3.500h10M38 13.500h6M38.500 3v11M48.500 3v5" stroke="#777" strokeWidth="1.500" /><circle cx="48" cy="13" r="2.600" fill="#f9a70c" /><path d="M48 8.500v9M43.500 13h9M45 10l6 6M51 10l-6 6" stroke="#f9a70c" />
              <path d="M57 8.500h11v8H57z" fill="#f9a70c" /><path d="M65 9V5q0-3 3-3t3 3v3" stroke="#f9a70c" strokeWidth="2" /><path d="M62.500 11v3" stroke="#7a5000" />
              <rect x="75.500" y="2.500" width="12" height="12" fill="#ff0000" stroke="#777" />
            </svg>
            <span className="ml-[5px] flex-1 tracking-[-0.1px]">DMNS</span><Chev /><span className="w-[5px]" />
          </div>
          <span className="w-[4px]" />
          <Layers top="#8ccaf7"><circle cx="9" cy="4" r="3.500" fill="#d9dadc" /></Layers>
          <span className="w-[7px]" />
          <Layers><path d="M1 3h7q2 0 2 4M4 0L1 3l3 3" stroke="#6fbdf5" strokeWidth="1.800" /></Layers>
          <span className="w-[7px]" />
          <Layers><rect x="8" y="8" width="8" height="7" fill="#e7e8ea" stroke="#3b4453" /><path d="M10 10.500h1M12 10.500h3M10 13h1M12 13h3" stroke="#333" /></Layers>
        </div>
        <div className={box + 'ml-0.5 w-[158px] pl-px'}>
          <Grip />
          <div className="ml-px flex h-5 flex-1 items-center bg-white pr-[5px] pl-[3px]"><span className="h-[14px] w-[14px] border border-[#777] bg-[#ff0000]" /><span className="ml-[3px] flex-1 pt-px tracking-[-0.6px]">ByLayer</span><Chev /></div>
        </div>
        <div className={box + 'ml-px w-[163px] pl-0.5'}>
          <div className="flex h-5 flex-1 items-center bg-white pr-[5px] pl-1"><span className="h-px w-[61px] bg-[#888]" /><span className="ml-[5px] flex-1 pt-px tracking-[-0.6px]">ByLayer</span><Chev /></div>
        </div>
        <div className={box + 'w-[129px] pl-0.5'}>
          <div className="flex h-5 flex-1 items-center bg-white pr-[5px] pl-[5px]"><span className="h-[2px] w-[35px] bg-black" /><span className="ml-[5px] flex-1 pt-px tracking-[-0.6px]">ByLayer</span><Chev /></div>
        </div>
        <div className={box + 'w-[122px] pl-0.5'}>
          <div className="flex h-5 flex-1 items-center bg-[#f7f7f7] pr-1 pl-[10px] text-[#8b8b8b]"><span className="flex-1 pt-px tracking-[-0.4px]">ByColor</span><Chev c="#bbb" /></div>
        </div>
      </div>
      <div className="mt-0.5 flex h-6">
        <div className={box + 'w-[284px] border-l-0'}>
          <svg width="3" height="16" viewBox="2 0 3 16" className="mr-1 shrink-0"><path d="M4 0v16" stroke="#c9ccd1" strokeDasharray="1 1" strokeWidth="2" /></svg>
          <Ic n="sizing" />
          <div className="ml-2 flex gap-[7.2px]">
            {SIZES.map((s, i) => (
              <span key={s} className={'flex h-4 w-4 shrink-0 items-center justify-center overflow-hidden border border-[#3f8fd8] text-center font-["Liberation_Sans"] leading-none tracking-tighter text-white ' + (s.length > 1 ? 'text-[11px] ' : 'text-[14px] ') + (i === 0 ? 'bg-[#174a7c]' : 'bg-[#1d64b4]')}>{s}</span>
            ))}
          </div>
        </div>
        <div className={box + 'ml-px w-[243px] pl-0.5'}>
          <Grip />
          <div className="ml-[3px] flex gap-[7.3px]">
            <Layers><path d="M9 9l6 6-3 1-4-4z" fill="#f0cf8a" /></Layers>
            <Layers top="#8ccaf7"><path d="M0 3l2.500 3L7 0" stroke="#53c878" strokeWidth="2" /></Layers>
            <Layers top="#8ccaf7"><path d="M15 9l-5 5M10 11v3.500h3" stroke="#fff" strokeWidth="1.300" /></Layers>
            <Layers top="#8ccaf7"><path d="M9 15l5-5M11 10h3.500v3.500" stroke="#fff" strokeWidth="1.300" /></Layers>
            <Svg><path d="M5 3h9l-4 4H1z" fill="#d9dadc" /><circle cx="7" cy="2.500" r="2.500" fill="#d9dadc" /><path d="M4 11h9l-4 4H0z" fill="#8ccaf7" /><circle cx="7" cy="10" r="2.500" fill="#8ccaf7" /><path d="M12 3q3 1 2 5" stroke="#d9dadc" /></Svg>
            <Layers top="#8ccaf7"><path d="M11.500 8v5M14.500 8v5M11.500 14v1.500M14.500 14v1.500" stroke="#fff" strokeWidth="1.800" /></Layers>
          </div>
          <span className="mx-[5px] h-5 w-px bg-[#59616e]" />
          <div className="flex gap-[7.3px]">
            <Sheet><path d="M9 6v9M5 8.300l8 4.400M13 8.300l-8 4.400" stroke="#6fd6dc" strokeWidth="1.400" /></Sheet>
            <Sheet><circle cx="10.500" cy="9" r="3" fill="#6fd6dc" /><rect x="9" y="12" width="3" height="3.500" fill="#e8f7f8" /></Sheet>
            <Sheet><rect x="6" y="9" width="9" height="6.500" fill="#6fd6dc" /><path d="M8 9V7q0-2 2.500-2T13 7v2" stroke="#6fd6dc" strokeWidth="1.400" /></Sheet>
            <Sheet><rect x="5" y="9" width="8" height="6.500" fill="#f6c45c" /><path d="M11 9V7q0-2 2-2t2 2v2" stroke="#f6c45c" strokeWidth="1.400" /></Sheet>
          </div>
        </div>
        <div className={box + 'ml-[3px] w-[151px] pl-0.5'}>
          <Grip />
          <div className="ml-[4px] flex gap-[7.3px]">
            <Svg><rect x="0" y="0" width="8" height="6" fill="#d9dadc" /><rect x="8" y="10" width="8" height="6" fill="#d9dadc" /><rect x="3" y="3" width="10" height="9" fill="#8ccaf7" stroke="#3b4453" strokeWidth="0.800" /></Svg>
            <Svg><rect x="5" y="4" width="9" height="8" fill="#8ccaf7" /><rect x="1" y="0" width="8" height="6" fill="#d9dadc" stroke="#3b4453" strokeWidth="0.700" /><rect x="7.500" y="9.500" width="8" height="6" fill="#d9dadc" stroke="#3b4453" strokeWidth="0.700" /></Svg>
            <Svg><rect x="1" y="2" width="9" height="8" fill="#d9dadc" /><rect x="5" y="5" width="11" height="8" fill="#8ccaf7" stroke="#3b4453" strokeWidth="0.700" /></Svg>
            <Svg><rect x="6" y="6" width="10" height="7" fill="#8ccaf7" /><rect x="1" y="2" width="9" height="8" fill="#d9dadc" stroke="#3b4453" strokeWidth="0.700" /></Svg>
          </div>
          <span className="mx-[5px] h-5 w-px bg-[#59616e]" />
          <Svg><path d="M1 5V2l1-1 1 1v3M1 3.500h2M5 1v4h2V1zM11.500 1.500H9.500v3h2" stroke="#8ccaf7" strokeWidth="0.900" /><path d="M3 6h11v6H6l-3 3z" fill="#d9dadc" /><path d="M14 5v10M10 15h4" stroke="#fff" strokeWidth="1.300" /></Svg>
          <span className="w-[6px]" />
          <Svg><rect x="0" y="0" width="11" height="9" fill="#d9dadc" /><path d="M5.500 6v10M14 4v12M3 6.500h13M3 14h13M7 13l5-6M9 14l5-6" stroke="#aeb6c2" strokeWidth="0.800" /></Svg>
        </div>
      </div>
    </div>
  );
}

/* ---------- drawing area ---------- */

const V_LEFT = [40, 61.500, 83, 104.500, 126, 147.500];
const H_LEFT = [303.500, 346.500, 389.500, 432.500, 475.500, 518, 571.500, 614.500, 657, 700.500, 743.500, 786.500, 829, 872.500];
const V_RIGHT = [191.500, 213, 235, 256.500, 278];
const H_RIGHT = [277, 299.500, 321, 342.500, 363.500, 385, 419, 440.500, 462, 483.500, 505, 545, 566.500, 588, 631, 652.500, 674.500, 706, 728, 749.500, 771.500, 792.500, 813, 835, 856.500, 878.500, 901];
const REDS: [number, number][] = [[278, 320], [342, 385], [440, 483], [545, 588], [631, 674], [728, 771], [835, 877]];
const DIM_DOTS: [number, number][] = [[29.500, 284], [136.500, 284], [29.500, 367.500], [136.500, 367.500], [29.500, 412], [136.500, 412], [29.500, 494.500], [136.500, 494.500], [29, 549.500], [136.500, 552], [29, 638], [136.500, 638], [29, 724], [136.500, 724], [29, 809], [136.500, 809], [51, 851], [113.500, 851]];
const HEADS: [number, number][] = [[115, 325], [115, 454], [224, 332], [224, 473], [246, 555.500], [29, 582], [115, 582], [246, 663], [29, 711], [115, 711], [246, 782], [246, 845.500], [29.500, 840], [115, 840]];
const RINGS = [415.500, 508.500, 605, 719.500, 827.500];
const NODES: [number, number][] = [[46, 307], [46, 342.500], [208.500, 330], [278.500, 297], [85, 415.500], [68, 508.500], [176, 508.500], [277, 508.500], [108.500, 659], [277.500, 659], [77, 827.500], [277.500, 827.500], [67, 877]];
const ARMS = ['M46 307L115 325', 'M20 335L46 342.500', 'M208.500 330L224 332', 'M85 415.500L115 454', 'M176 508.500L224 473', 'M277 508.500L246 555.500', 'M20 582H29', 'M115 582L108.500 659', 'M277 659L246 663', 'M29 711V719', 'M115 711V719', 'M246 782V827', 'M277 827.500L246 845.500', 'M77 827.500L115 840', 'M29.500 840L67 877', 'M164.500 605V659'];
const PIPES: [string, string][] = [['M46 272V415', '15 3 9 3'], ['M208.500 272V415', '14 4 9 3'], ['M278.500 272V415', '16 4'], ['M20 508.500H277', '16 6 11 5'], ['M20 659H277', '13 4 19 4'], ['M20 827.500H277', '15 4 20 5'], ['M20 877H67', '8 4 13 4']];
const ROOMS: [string, number, number][] = [['A568', 213.500, 326.500], ['A569', 213.500, 407.500], ['B513', 213.500, 528], ['B514', 213.500, 613], ['B515', 213.500, 706.500], ['B516', 213.500, 813.500], ['B512', 17, 829.500], ['B517', 112.500, 886.500]];
const TAGS: [number, number][] = [[213, 348], [210.500, 567.500], [211.500, 773]];
const NOTES: [string, number, number, number][] = [
  ['1', 81, 314, 15], ['6-8', 80, 321, 15], ['7', 22, 344, 15], ['1', 199, 327, 0], ['1-5', 198, 334.500, 0], ['1', 104, 434, 52], ['4-6½', 96, 438, 52],
  ['1', 196, 488, -36], ['5-7', 203, 495, -36], ['2-9½', 266, 535, -57], ['1', 109, 620, -86], ['7-2½', 117, 621, -86],
  ['4-11¾', 170, 632, -90], ['1', 266, 666, -5], ['2-11¾', 267, 674, -5], ['8-0', 72, 725, 0], ['4-7', 139, 725, 0], ['1', 25, 731, -90], ['0-9½', 35, 731, -90],
  ['1', 111, 731, -90], ['0-9½', 121, 731, -90], ['4-3½', 251, 804, -90], ['1', 94, 839, 18], ['3-8½', 91, 847, 18], ['3-4½', 264, 842, -28], ['4-11¾', 45, 862, 45],
  ['1½', 43, 324, -90], ['1½', 43, 379, -90], ['1½', 206, 293, -90], ['1½', 206, 372, -90], ['1½', 276, 356, -90],
  ['3', 27, 414, 0], ['3', 65.500, 414, 0], ['3', 147, 414, 0], ['3', 186, 414, 0], ['3', 269, 422, 0],
  ['1½', 116, 507, 0], ['1½', 227, 507, 0], ['1½', 137, 658, 0], ['1½', 221, 658, 0], ['1½', 72, 718, 0], ['1½', 140, 718, 0], ['1½', 142, 827, 0], ['1½', 205, 827, 0], ['1½', 288, 827, 0], ['1½', 30, 876, 0],
];

function Plan() {
  return (
    <svg width="1177" height="705" viewBox="20 272 1177 705" fill="none" className="shrink-0" fontFamily="Liberation Sans, sans-serif">
      <g stroke="#41474e" strokeWidth="1">
        {V_LEFT.map((x) => <path key={x} d={`M${x} 272V883`} />)}
        {H_LEFT.map((y) => <path key={y} d={`M20 ${y}H158`} />)}
        {V_RIGHT.map((x) => <path key={x} d={`M${x} 272V907`} />)}
        {H_RIGHT.map((y) => <path key={y} d={`M174 ${y}H297`} />)}
        <path d="M297.500 272V520" />
      </g>
      <g stroke="#8b3f42" strokeWidth="1.200">
        <path d="M83 303V475M82.500 611V827" />
        {REDS.map(([a, b]) => <path key={a} d={`M213.500 ${a}V${b}M256.500 ${a}V${b}`} />)}
      </g>
      {DIM_DOTS.map(([x, y], i) => <circle key={i} cx={x} cy={y} r="1.800" fill="#6a3a3e" stroke="#934b4e" strokeWidth="1" />)}
      <rect x="158.500" y="272" width="12" height="636" fill="#585b5e" />
      <path d="M158.500 272V908M161 272V520" stroke="#74787c" />
      <path d="M171 272V883" stroke="#f0f0f0" strokeWidth="2.400" /><path d="M174 272V908" stroke="#9a9da0" />
      <path d="M168.500 272V400M168.500 405V520M168.500 620V883" stroke="#9da0a3" strokeWidth="0.800" />
      <path d="M20 525H40M61 524.500H95M115 524.500H150" stroke="#b8713c" /><path d="M21 527h4v-2M76 527h4v-2M131 527h4v-2" stroke="#a04a4a" />
      <path d="M20 522H297.500V534H306M20 525.500H294.500V536.500H306" stroke="#a6a9ac" />
      <path d="M173 398.500H307M173 403.500H307" stroke="#96999d" strokeWidth="1.300" />
      <path d="M173 608.500H281M173 611.500H281M173 694H296M173 698.500H296M173 802H296M173 805.500H296" stroke="#c5c7c9" />
      <path d="M128.500 528V514.500H147M128.500 515V529.500H148M152 545V500.500H164M155 545V503M152 546H166M28.500 875V865.500H43.500V875M155 880V866H158" stroke="#555b62" />
      <path d="M20 883.500H36V907H281" stroke="#aaacae" strokeWidth="1.500" />
      <path d="M36 883.500H158" stroke="#54595f" strokeWidth="1.200" /><path d="M36 895.500H112" stroke="#d0771c" strokeWidth="1.500" strokeDasharray="6 5" /><path d="M36 893.500H158V907" stroke="#a57248" />
      <path d="M20 886H33V911H281V922H297V977H20z" fill="#707377" />
      <path d="M20 886H33V910.500H281" stroke="#ededed" strokeWidth="1.500" />
      {/* east façade */}
      <g stroke="#b4b7ba">
        <path d="M305.500 272V577M298 290.500H313.500V402.500M311 291V402M308.500 291V402M313.500 290.500L312 283L315.500 272M313.500 402L315 410Q316.500 427 315 445L313 452M298 452.500H313.500V563.500H298M311 453V563M308.500 453V563M298 563.500H311V568H315V605H312V613.500H281V577M308 577V599H298M305 607V577M313.500 585.500h2v5h-2z" />
        <path d="M293.500 613V885M296 613V885M299.500 613V885M305.500 613V600" />
        <path d="M306 293h5M306 320h5M306 373h5M306 455h5M306 481h5M306 534h5M306 561h5M294 615h5M294 669h5M294 696h5M294 750h5M294 803h5M294 830h5" stroke="#e8e8e8" strokeWidth="2" />
        <path d="M281 922V885.500H312V891.500H315V930.500H312V935.500H297M305.500 935V892.500H294V885M281 922.500H308.500V977M313.500 977V935.500M305.500 936V977M297.500 922V977M313.500 908.500h2v5h-2z" />
        <rect x="286.500" y="900.500" width="22" height="21" stroke="#d0d2d4" /><path d="M287 921L308 901M294 592L305 581" />
      </g>
      <path d="M310.500 922V977M296.500 613V885" stroke="#b06a6a" strokeWidth="0.800" />
      <path d="M281 576H308V580H295V595H298V613H293V600H281z" fill="#8b8d90" />
      {/* pipework */}
      {PIPES.map(([d, dash]) => <g key={d}><path d={d} stroke="#a7a216" /><path d={d} stroke="#fdfdfd" strokeWidth="2.600" strokeDasharray={dash} /></g>)}
      <path d="M20 719.500H160" stroke="#fdfdfd" strokeWidth="2.600" /><path d="M160 719.500h5" stroke="#a7a216" />
      <path d="M20 415.500H288" stroke="#9b2fae" /><path d="M20 415.500H288" stroke="#ff0808" strokeWidth="3.400" strokeDasharray="13 6" strokeDashoffset="2" /><path d="M284 410.500H288.500V420.500H284" stroke="#ff0808" strokeWidth="2" />
      {ARMS.map((d) => <path key={d} d={d} stroke="#f8f8f8" strokeWidth="1.500" />)}
      {HEADS.map(([x, y], i) => <g key={i}><circle cx={x} cy={y} r="5.300" stroke="#d80c0c" strokeWidth="1.100" /><circle cx={x} cy={y} r="2.700" fill="#e80808" /></g>)}
      {RINGS.map((y) => <circle key={y} cx="164.500" cy={y} r="5.500" stroke="#e02020" strokeWidth="1.200" />)}
      {NODES.map(([x, y], i) => <circle key={i} cx={x} cy={y} r="2.600" fill="#e80808" />)}
      <path d="M164.500 605v6M115 582v6M108.500 659v-5M246 782v4M29 711v4M115 711v4M46 307l5 1.300M41 341l5 1.500M115 325l-5-1.300M224 473l-4 3M176 508.500l4-3M246 555.500l3-4M67 877l-3-3M115 840l-4-1.300M246 663l4-.5" stroke="#20c020" />
      <g>{ROOMS.map(([t, x, y]) => (
        <g key={t}><rect x={x} y={y} width="42.500" height="12" stroke="#8e9296" /><text x={x + 10} y={y + 10} fontSize="11.200" fill="#c0c3c6" textLength="27">{t}</text></g>
      ))}</g>
      {TAGS.map(([x, y]) => (
        <g key={y}><rect x={x} y={y} width="42" height="10" rx="5" stroke="#b8babd" /><text x={x + 3.500} y={y + 8} fontSize="8.500" fill="#d8dadc" textLength="36">9'-0"|ACT</text></g>
      ))}
      <g fill="#e2e3e5" fontSize="7" textAnchor="middle">
        {NOTES.map(([t, x, y, r], i) => <text key={i} x={x} y={y} transform={`rotate(${r} ${x} ${y})`}>{t}</text>)}
      </g>
      <text x="22" y="289" fontSize="12" fontFamily="Open Sans, sans-serif" fill="#d6d8da" textLength="125" lengthAdjust="spacingAndGlyphs">[−][Top][2D Wireframe]</text>
      <path d="M315 276.500H398M405 276.500H487M401.500 280V361" stroke="#c9cbcd" /><rect x="397.500" y="272.500" width="8" height="8" stroke="#e2e3e5" />
    </svg>
  );
}

const cell = 'border-r border-[#b9bcbf] text-center last:border-r-0 ';

function ScheduleTable() {
  const cols = 'grid grid-cols-[65px_50px_57px_79px_172px_1fr] border-b border-[#c4c6c8] ';
  return (
    <div className="absolute top-[218px] left-[671px] w-[496px] border border-[#b9bcbf] font-['Noto_Sans'] text-[10.5px] font-light tracking-[0.4px] text-white">
      <div className="h-[28px] border-b border-[#c4c6c8] text-center font-['Liberation_Serif'] text-[19.5px] leading-[25px] tracking-[0.9px] [word-spacing:5px]"><span className="inline-block origin-center scale-x-[0.88]">Sprinkler Head Schedule</span></div>
      <div className={cols + 'h-[23px] text-[12.5px] leading-[22px] tracking-[0.7px]'}>
        {['Symbol', 'Count', 'Thread', 'K−Factor', 'Description', 'Note'].map((t) => <span key={t} className={cell}>{t}</span>)}
      </div>
      <div className={cols + 'h-[23px] leading-[20px]'}>
        <span className={cell + 'flex items-center justify-center pr-[6px]'}><i className="h-[6px] w-[6px] rounded-full bg-[#e6e7e9]" /></span>
        {['69', '1/2"', '5.6', 'AUXDRAIN10', 'ON DROP'].map((t) => <span key={t} className={cell}>{t}</span>)}
      </div>
      <div className={cols + 'h-[22px] leading-[18px]'}>
        <span className={cell + 'flex items-center justify-center pr-[6px]'}><i className="flex h-[12px] w-[12px] items-center justify-center rounded-full border border-[#e6e7e9]"><i className="h-[6px] w-[6px] rounded-full bg-[#e6e7e9]" /></i></span>
        {['53', '1/2"', '5.6', 'HEAD1', 'ON DROP'].map((t) => <span key={t} className={cell}>{t}</span>)}
      </div>
      <div className="h-[20px] pr-1 text-center leading-[18px] tracking-[0.5px] [word-spacing:4px]"><span className="bg-[#c6c8ca] text-white">122</span> = Total Number of Heads This Floor</div>
    </div>
  );
}

function CommandLine() {
  return (
    <div className="absolute top-[672px] left-[585px] flex h-8 w-[517px] items-center bg-[#2a303c] pl-[7px]">
      <svg width="51" height="20" viewBox="0 0 51 20" fill="none" className="shrink-0">
        <path d="M1.500 2v17" stroke="#9a9fa7" strokeDasharray="1 2" strokeWidth="1.200" /><path d="M10 6l8 8M18 6l-8 8" stroke="#c6c8cc" strokeWidth="1.800" />
        <path d="M31 17l8-8" stroke="#bfc2c6" strokeWidth="2.800" /><path d="M44.500 5.500A4 4 0 1 1 41 2.500l-1.500 3 1.500 1.500z" fill="#bfc2c6" />
      </svg>
      <div className="flex h-[31px] flex-1 items-center bg-[#bcbec0] pr-[3px] pl-1">
        <svg width="27" height="14" viewBox="0 0 27 14" fill="none"><rect x="0.500" y="1.500" width="15" height="11" stroke="#55585c" /><path d="M0 3h16" stroke="#55585c" strokeWidth="2" /><path d="M2.500 6l2 1.500-2 1.500M5.500 10h4" stroke="#55585c" /><path d="M18.500 5h7.500l-3.700 4z" fill="#4a4d51" /></svg>
        <span className="ml-[5px] flex-1 font-['DejaVu_Sans_Mono'] text-[12px] tracking-[0.080px] text-[#66696d] italic">Type a command</span>
        <svg width="8" height="5" viewBox="0 0 8 5"><path d="M0 4h8L4 0z" fill="#4a4d51" /></svg>
      </div>
    </div>
  );
}

function Canvas() {
  return (
    <div className="relative flex h-[705px] bg-[#222830]">
      <div className="flex w-5 shrink-0 flex-col bg-[#262c36] pt-[5px] text-[12px] text-[#cfd2d7]">
        <div className="flex h-[345px] w-[18px] bg-[#3b4453] pb-[106px]"><span className="mt-auto rotate-180 leading-[16px] tracking-[-0.43px] whitespace-nowrap [writing-mode:vertical-rl]">Layer Properties Manager</span></div>
        <div className="mt-[5px] flex h-[345px] w-[18px] bg-[#3b4453] pb-[147px]"><span className="mt-auto rotate-180 leading-[16px] tracking-[-0.45px] [writing-mode:vertical-rl]">Properties</span></div>
      </div>
      <Plan />
      <ScheduleTable />
      <div className="absolute top-[410px] left-[504px] h-[71px] w-[639px] border-2 border-[#ff0000] bg-white pl-2 font-['Liberation_Sans'] text-[45px] leading-[57px] tracking-[0.3px] whitespace-nowrap text-[#ff0000]">Go back to your paper space</div>
      <CommandLine />
    </div>
  );
}

/* ---------- status bar ---------- */

const St = ({ w = 'w-6', on, children }: { w?: string; on?: boolean } & Kids) => (
  <span className={'flex h-[23px] shrink-0 items-center justify-center ' + w + (on ? ' bg-[#5f8fc4]' : ' bg-[#3b4453]')}>{children}</span>
);
const L = '#c8cbd0';

function StatusBar() {
  return (
    <div className="flex h-[34px] items-center overflow-hidden border-t-4 border-[#3b4453] bg-[#222933] pb-0.5 text-[12px] text-[#d3d6da]">
      <div className="-ml-px flex w-[387px] shrink-0 items-center pb-[3px]">
        <div className="flex w-[38px] pl-[12px]"><Burger /></div>
        <div className="flex h-[23px] w-[69px] items-center bg-[#3b4453] pl-[16px] font-bold tracking-[-0.1px] text-white [clip-path:polygon(9px_0,100%_0,calc(100%-10px)_100%,0_100%)]">Model</div>
        <span className="ml-[7px] w-[42px]">18X24</span><Slash /><span className="ml-[7px] w-[29px] tracking-[-0.3px]">FP1</span><Slash /><span className="ml-[7px] w-[42px]">30X42</span><Slash /><span className="ml-[7px] w-[42px]">36X48</span><Slash />
        <span className="w-[11px]" /><Plus /><Slash c="ml-3" />
      </div>
      <span className="mr-1 flex h-[23px] w-[179px] shrink-0 items-center justify-end bg-[#3b4453] pt-px pr-[5px] text-[12px] font-medium tracking-[-0.15px] text-white">521'-2", 178'-9 1/4", 0'-0"</span>
      <span className="mr-1 flex h-[23px] w-12 shrink-0 items-center justify-center bg-[#3b4453] pt-px font-medium tracking-[-0.3px] text-white">MODEL</span>
      <St><Svg><path d="M3.500 0v16M8 0v16M12.500 0v16M0 3.500h16M0 8h16M0 12.500h16" stroke={L} /></Svg></St>
      <St><Svg><path d="M2 3h14M2 8h14M2 13h14" stroke={L} strokeWidth="2" strokeDasharray="2 3" /></Svg></St>
      <St w="w-[15px] mr-1"><ArrL /></St>
      <St w="w-[24px] mr-0.5"><Svg><path d="M7 1.500h8.500v6H9" stroke={L} /><path d="M7.500 1v6" stroke={L} /><rect x="0" y="8" width="8" height="7" fill="#dcdee0" /></Svg></St>
      <St on w="w-[23px] mr-0.5"><Svg><path d="M4 1v7M0.500 4.500h7" stroke="#dfe9f5" /><path d="M6 8.500h10v4H6z" fill="#fff" /><path d="M6 8h3v5H6z" fill="#3b6ca5" /></Svg></St>
      <St w="w-[23px]"><Svg><path d="M1.500 0v14H16M1.500 9.500h4V14" stroke={L} /></Svg></St>
      <St w="w-[24px]"><Svg s={17}><circle cx="7" cy="8" r="6" stroke={L} /><path d="M7 8h9M7 8l6-6M11 3.500L13.500 2" stroke={L} /></Svg></St>
      <St w="w-4"><ArrL /></St>
      <St w="w-6"><Svg><path d="M7.500 0v16" stroke="#4fc08a" /><path d="M1 2l14 12" stroke="#c0545c" /><rect x="6" y="6" width="3.500" height="3.500" fill="#3b4453" stroke="#ddd" /></Svg></St>
      <St w="w-[16px] mr-0.5"><ArrL /></St>
      <St><Svg><path d="M0 14.500h16M1 14L11 4" stroke={L} /><path d="M7 5l3 3" stroke="#fff" strokeWidth="2" /></Svg></St>
      <St on w="w-[23px]"><Svg><path d="M3 4v11.500h12.500V3H5" stroke="#e6eef8" strokeWidth="1.200" /><rect x="0.500" y="0.500" width="4" height="4" fill="#5f8fc4" stroke="#fff" /></Svg></St>
      <St w="w-[16px] mr-0.5"><ArrL /></St>
      <St w="w-[24px] mr-[1px]"><Svg><path d="M0 2.500h16" stroke={L} /><path d="M0 6h16" stroke={L} strokeWidth="1.500" /><path d="M0 10h10" stroke="#fff" strokeWidth="2" /><path d="M10 10h6" stroke={L} /><path d="M0 14h16" stroke="#fff" strokeWidth="2" /></Svg></St>
      <St on w="w-[23px] mr-0.5"><Svg><rect x="0.500" y="0.500" width="15" height="15" stroke="#fff" /><g fill="#fff">{[0, 1, 2, 3].map((r) => [0, 1].map((c) => <rect key={r + '-' + c} x={2 + c * 6 + (r % 2) * 3} y={2 + r * 3} width="3" height="3" />))}</g></Svg></St>
      <St w="w-[24px] mr-0.5"><Svg><path d="M2.500 0v5M0 2.500h5M7 3.500h9M4.500 6v9" stroke={L} /><rect x="6" y="6" width="10" height="9" fill="#7fd4a0" /></Svg></St>
      <St on w="w-[23px]"><Svg><path d="M3 12V4l3-3h9v9l-3 4H5M3 4h9v9M12 4l3-3" stroke="#fff" strokeWidth="1.100" /><rect x="0.500" y="11.500" width="4" height="4" fill="#5f8fc4" stroke="#fff" /></Svg></St>
      <St w="w-[16px] mr-1"><ArrL /></St>
      <St w="w-[23px]"><Svg><path d="M2.500 1v13H15M1 4l1.500-3L4 4M13 12.500l3 1.500-3 1.500M2 7h4" stroke={L} /><path d="M11 3L7.500 8H10l-1 4 4-5.500h-3z" fill="#e8e9eb" /></Svg></St>
      <St w="w-[25px]"><Svg><path d="M2.500 3v11h10M5 1.500h10V12l-3 2M12.500 3v11M3 3.500h10" stroke={L} /><g fill="#58a8ee"><rect x="0" y="1" width="4" height="4" /><rect x="11" y="1" width="4" height="4" /><rect x="0" y="12" width="4" height="4" /><rect x="11" y="12" width="4" height="4" /></g></Svg></St>
      <St w="w-4"><ArrL /></St>
      <St on w="w-[23px]"><Svg><path d="M8 1v5M4 7l4-2 4 2v4l-4 2-4-2zM4 7l4 2 4-2M8 9v4" stroke="#fff" /><circle cx="8" cy="2" r="1.700" stroke="#fff" /><circle cx="2.500" cy="12.500" r="2" stroke="#fff" /><circle cx="13.500" cy="12.500" r="2" stroke="#fff" /><path d="M8 1L2 11M8 1l6 10M3 14q5 2 10 0" stroke="#fff" strokeWidth="0.700" /></Svg></St>
      <St w="w-[16px] mr-1"><ArrL /></St>
      <St on w="w-[23px]"><Svg><path d="M6 0q2 2 2 7l4 5v2l-4-2-.5 4h-3L4 12l-4 2v-2l4-5q0-5 2-7z" fill="#fff" /><circle cx="13" cy="3.500" r="2.500" stroke="#fff" /></Svg></St>
      <St w="w-[25px]"><Svg><path d="M6 1q2 2 2 7l4 5v2l-4-2-.5 3h-3L4 13l-4 2v-2l4-5q0-5 2-7z" fill="#d6d8db" /><path d="M14 0l-4 5h3l-1 4 4-5h-3z" fill="#d6d8db" /></Svg></St>
      <St w="w-[24px]"><Svg><path d="M7 1q2 2 2 7l4 5v2l-4-2-.5 3h-3L5 13l-4 2v-2l4-5q0-5 2-7z" fill="#d6d8db" /></Svg></St>
    </div>
  );
}

/* ---------- taskbar ---------- */

const App24 = ({ w = 'w-11', children }: { w?: string } & Kids) => (
  <span className={'flex shrink-0 justify-center ' + w}><svg width="26" height="24" viewBox="0 0 26 24" fill="none" className="overflow-visible">{children}</svg></span>
);

function Taskbar() {
  return (
    <div className="flex h-9 border-t border-[#33373d] bg-black pt-[10px] pl-[5px]">
      <App24><g fill="#48b8f2"><rect x="1" width="11.500" height="11.500" fill="#7fd9fb" /><rect x="13.500" width="11.500" height="11.500" fill="#5ecbf8" /><rect x="1" y="12.500" width="11.500" height="11.500" /><rect x="13.500" y="12.500" width="11.500" height="11.500" fill="#2fa6ea" /></g></App24>
      <App24 w="w-[45px]"><rect x="1" y="6" width="18" height="16" fill="#5f5f5f" /><rect x="7" y="0" width="18" height="16" fill="#fff" /><rect x="7" y="6" width="12" height="10" fill="#b5b5b5" /></App24>
      <App24 w="w-[43px]"><path d="M1 1q0-1 1-1h7l2 3h12q2 0 2 2v17H1z" fill="#e9a520" /><rect x="1" y="4" width="24" height="18" rx="1" fill="#fccf4e" /><path d="M5 22v-5q0-2 2-2h12q2 0 2 2v5z" fill="#1573c4" /><path d="M9 19h8" stroke="#0b4a85" strokeWidth="1.500" /></App24>
      <App24 w="w-[44px]">
        <circle cx="13" cy="12.500" r="11" fill="#ff6a2a" /><path d="M13 0q4 2 4 5 7 1 7 8-1 5-4 8 2-12-7-14z" fill="#ffd43a" /><path d="M2 12q0 11 11 11.500 9-1 11-9-6 5-12 3z" fill="#f0246c" /><circle cx="13" cy="12.500" r="5" fill="#7a3ce0" /><path d="M4 5l4 4 5 1-3 3-6 1z" fill="#ff9a2a" />
      </App24>
      <App24 w="w-[44px]"><circle cx="13" cy="12" r="12" fill="#fcc934" /><path d="M13 12L2.600 6A12 12 0 0 1 23.400 6z" fill="#ea4335" /><path d="M13 12L2.600 6A12 12 0 0 0 12 24l5-9z" fill="#34a853" /><path d="M13 6h10.500a12 12 0 0 0-20.800 0L8 14z" fill="#ea4335" /><circle cx="13" cy="12" r="5.600" fill="#fff" /><circle cx="13" cy="12" r="4.400" fill="#2f7bea" /></App24>
      <App24><rect x="1.500" y="1" width="23" height="22" rx="5" fill="#1b1b1b" stroke="#f2f2f2" strokeWidth="1.500" /><path d="M19 7l-3-2.500h-6L6 9v6l4 4.500h6l3-2.500M20 12h5" stroke="#f2f2f2" strokeWidth="2" /><path d="M10 9.500l3-1.700 3 1.700v5l-3 1.700-3-1.700z" fill="#d5254c" stroke="#fff" strokeWidth="1.200" /></App24>
      <App24><circle cx="13" cy="12" r="11" fill="#1ed760" /><path d="M6.500 8.500q7-2.500 13.500 1M7.500 12.500q6-2 11 1M8.500 16q5-1.500 9 1" stroke="#061a0c" strokeWidth="1.900" strokeLinecap="round" /></App24>
      <App24 w="w-[43px]"><defs><linearGradient id="pg" x1="0" y1="1" x2="1" y2="0"><stop stopColor="#2448f0" /><stop offset="0.500" stopColor="#a524b0" /><stop offset="1" stopColor="#ff2a1c" /></linearGradient></defs><rect x="1" width="24" height="24" fill="url(#pg)" /><path d="M6.500 19h3.500v-2q-3-1.500-3-5.500 0-6 6-6t6 6q0 4-3 5.500v2h3.500M10.500 19v-8q0-2.500 2.500-2.500t2.500 2.500-2.500 2.500M10.500 19h5v-2" stroke="#e6e2fa" strokeWidth="1.300" /></App24>
      <App24 w="w-[45px]"><circle cx="13" cy="12" r="11.500" fill="#0f9fe0" /><path d="M3 6q9-5 15-2 3 3-5 7M14 7q-4 6-6 15M13 11q7 1 4 6-4 5-10 5" stroke="#fff" strokeWidth="2.400" /></App24>
      <App24 w="w-[43px]">
        <circle cx="18" cy="4" r="4" fill="#7b83eb" /><path d="M10 9h16v8q-1 6-8 6t-8-6z" fill="#6b72d8" /><rect x="1" y="6" width="13" height="13" rx="1" fill="#4a52b8" /><path d="M4.500 9.500h6M7.500 9.500v7" stroke="#fff" strokeWidth="1.500" /><circle cx="21.500" cy="3" r="7.300" fill="#10a010" /><path d="M18.500 3l2 2 4-4" stroke="#063" strokeWidth="1.500" />
      </App24>
      <App24 w="w-[43px]"><rect x="8" y="1" width="16" height="14" fill="#1a86d8" /><rect x="16" y="1" width="8" height="7" fill="#35b1f3" /><path d="M6 12l9.500 5L25 12v11H6z" fill="#1674c9" /><path d="M25 12v11H8z" fill="#4fc3f5" /><rect x="1" y="6" width="12" height="13" rx="1" fill="#0c5cad" /><circle cx="7" cy="12.500" r="2.700" stroke="#fff" strokeWidth="1.500" /></App24>
      <App24 w="w-[44px]">
        <path d="M-6.500 25V-5q0-3 3-3h33q3 0 3 3v30z" fill="#1f1f1f" /><rect x="1" y="0" width="24" height="24" fill="#dcdcdc" /><path d="M1 0h24L3 20l-2 2z" fill="#b8342c" /><path d="M13 0l12 0v24H1l3-9z" fill="#dcdcdc" /><path d="M13 0v4M8 3.500h10" stroke="#111" strokeWidth="1.800" /><path d="M13 4q-4 5-3 9l-3 5 4-1 2 4 2-4 4 1-3-5q1-4-3-9z" fill="#fff" stroke="#111" strokeWidth="1.300" /><circle cx="13.500" cy="22" r="1.300" stroke="#111" />
      </App24>
      <App24 w="w-[43px]"><path d="M4 24V10q0-10 9-10t9 10v14z" fill="#1878c0" /><ellipse cx="13" cy="18" rx="6" ry="7" fill="#fff" /><circle cx="9.500" cy="8" r="3.800" fill="#fff" /><circle cx="16.500" cy="8" r="3.800" fill="#fff" /><circle cx="10.500" cy="8" r="1.700" fill="#111" /><circle cx="15.500" cy="8" r="1.700" fill="#111" /><path d="M8.500 14q4.500-6 9 0l-4.500 5z" fill="#f29a22" /></App24>
      <App24 w="w-[44px]"><rect x="6" y="1" width="19" height="22" rx="1" fill="#21a366" /><rect x="15" y="1" width="10" height="7" fill="#33c481" /><rect x="6" y="12" width="19" height="11" fill="#107c41" /><rect x="15" y="12" width="10" height="5" fill="#185c37" opacity=".5" /><rect x="1" y="6" width="12" height="12.500" rx="1" fill="#0f6d3a" /><path d="M4.500 9l5 7M9.500 9l-5 7" stroke="#fff" strokeWidth="1.700" /></App24>
      <App24 w="w-[44px]"><rect x="1" y="2" width="24" height="20" rx="1" fill="#404040" /><rect x="1" y="2" width="24" height="4" fill="#b9b9b9" /><path d="M5 9l5 4-5 4" stroke="#f2f2f2" strokeWidth="2" /><path d="M12 18h8" stroke="#f2f2f2" strokeWidth="2" /></App24>
      <App24><path d="M19 0l6 3v18l-6 3L9 14l-5 4-3-1.500L5.500 12 1 7.500 4 6l5 4zM19 7l-6 5 6 5z" fill="#1f8fdc" fillRule="evenodd" /><path d="M19 0l6 3v18l-6 3z" fill="#35a5f0" /></App24>
      <App24 w="w-[43px]"><rect x="2" y="1" width="22" height="22" rx="3" fill="#1b66c0" /><path d="M3 20L12 9q1-1 2 0l9 11q0 3-3 3H6q-3 0-3-3z" fill="#49bff2" /><path d="M12 9q1-1 2 0l9 11-4 3z" fill="#8fdcfb" /><circle cx="18" cy="6" r="2" fill="#e8f6ff" /></App24>
    </div>
  );
}

function Markup() {
  return (
    <svg width="1197" height="1047" viewBox="0 0 1197 1047" fill="none" stroke="#ff0000" strokeWidth="2" className="pointer-events-none absolute top-0 left-0">
      <path d="M505 717.500H434L222 954.500" />
      <path d="M139 983A18 18 0 0 1 150 950.500A18 18 0 0 1 167.500 965M165 958A18 18 0 0 1 197.500 965M195 958A18 18 0 0 1 228.500 968Q228 979 219 984" />
      <path d="M213 986C222 983 228.500 990 228.500 998C228.500 1009 219 1018 206 1016M212.500 1015A18 18 0 0 1 177 1017M180 1023A18 18 0 0 1 147 1009M147.500 1016C136 1015 132 1006 132 998C132 988 138 980 147 980.500" />
    </svg>
  );
}

export default function App() {
  return (
    <div className="relative h-[1047px] w-[1197px] overflow-hidden bg-[#222933] font-['Open_Sans',sans-serif] leading-4">
      <TitleBar />
      <Menus />
      <Ribbon />
      <DocTabs />
      <Toolbars />
      <Canvas />
      <StatusBar />
      <Taskbar />
      <Markup />
    </div>
  );
}
